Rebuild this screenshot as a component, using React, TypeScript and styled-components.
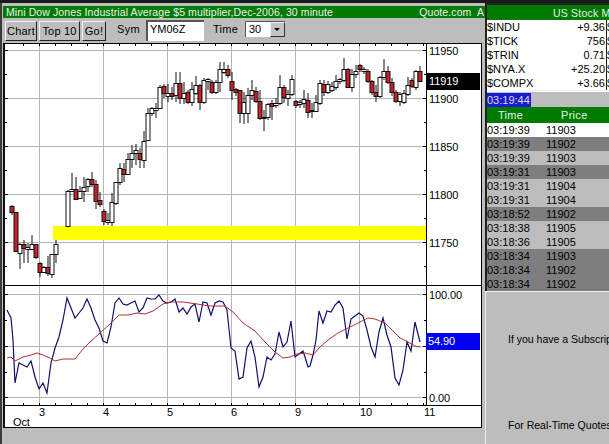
import React from 'react';
import styled, {createGlobalStyle} from "styled-components";

const GlobalStyle = createGlobalStyle`
    html, body {
        margin: 0;
        padding: 0;
        background: #bdbdbd;
    }
`

// [top, bottom, wick high, wick low, red], all in page pixels. null is a bar with no trade
type Bar = [number, number, number, number, boolean] | null
const R = true
const W = false

const bars: Bar[] = [
    [206, 212, 205, 215, R], [212, 251, 212, 251, R], [244, 253, 243, 269, W], [244, 248, 240, 263, R],
    [247, 249, 243, 263, W], [244, 249, 235, 250, W], [244, 257, 244, 259, R], [263, 272, 262, 277, R],
    [267, 272, 266, 273, W], [267, 273, 256, 276, R], [254, 274, 254, 278, W], [244, 254, 240, 263, W],
    null, null,
    [191, 226, 190, 226, W], [189, 191, 173, 192, W], [189, 199, 177, 199, R], [191, 198, 186, 199, W],
    [187, 191, 177, 202, W], [179, 186, 178, 192, W], [179, 184, 172, 187, R], [184, 201, 180, 209, R],
    [200, 204, 192, 207, R], [211, 221, 209, 225, R], [220, 222, 213, 225, W], [202, 222, 193, 226, W],
    [182, 203, 182, 205, W], [168, 182, 163, 185, W], [169, 174, 163, 182, R], [159, 174, 153, 175, W],
    [153, 159, 145, 168, W], [150, 153, 144, 165, W], [153, 159, 148, 168, R], [141, 160, 131, 168, W],
    [113, 140, 108, 141, W], [108, 113, 107, 116, W], [108, 110, 103, 118, W], [87, 108, 85, 109, W],
    [86, 93, 84, 98, R], [93, 96, 84, 102, W], [93, 96, 87, 100, R], [83, 95, 72, 102, W],
    [83, 98, 72, 104, R], [93, 98, 82, 104, W], [92, 102, 90, 104, R], [89, 102, 82, 106, W],
    [85, 93, 76, 95, W], [85, 102, 84, 110, R], [80, 102, 78, 104, W], [79, 81, 78, 90, W],
    [82, 92, 80, 94, R], [82, 92, 80, 94, W], [69, 82, 62, 92, W], [69, 72, 62, 74, W],
    [69, 75, 65, 78, R], [81, 90, 72, 100, R], [89, 92, 88, 96, R], [90, 113, 90, 123, R],
    [102, 113, 92, 124, W], [95, 113, 88, 123, W], [90, 95, 80, 100, W], [91, 101, 87, 103, R],
    [101, 118, 90, 120, R], [117, 118, 110, 131, W], [104, 117, 103, 120, W], [103, 106, 100, 120, R],
    [103, 105, 98, 108, W], [87, 103, 75, 105, W], [87, 97, 85, 103, R], [94, 98, 90, 106, W],
    [79, 94, 75, 96, W], [101, 105, 100, 108, R], [102, 104, 100, 108, W], [99, 103, 90, 108, W],
    [100, 112, 93, 118, R], [110, 111, 103, 118, W], [102, 111, 95, 112, W], [83, 103, 80, 105, W],
    [84, 92, 80, 96, R], [84, 92, 81, 94, W], [86, 90, 82, 92, W], [81, 87, 75, 90, W],
    [79, 81, 78, 84, W], [69, 80, 58, 82, W], [69, 87, 68, 88, R], [74, 87, 69, 92, W],
    [71, 74, 65, 78, W], [65, 69, 64, 72, R], [69, 71, 67, 74, W], [71, 81, 69, 83, R],
    [81, 92, 80, 95, R], [92, 96, 85, 102, R], [77, 96, 76, 98, W], [71, 77, 59, 80, W],
    [71, 82, 66, 84, R], [82, 92, 78, 96, R], [92, 101, 90, 103, R], [94, 101, 92, 106, W],
    [93, 102, 90, 104, W], [85, 94, 77, 96, W], [80, 86, 78, 88, R], [71, 87, 70, 90, W],
    [71, 81, 66, 82, R],
]

const oscillator = "7,310 11,318 13,340 15,383 19,363 23,365 27,367 31,361 35,377 39,389 43,383 47,393 51,363 55,348 59,337 63,320 67,298 71,308 75,318 79,313 83,308 87,299 91,308 95,320 99,328 103,341 107,343 111,327 115,303 119,298 123,304 127,305 131,303 135,301 139,312 143,308 147,298 151,299 155,299 159,295 163,301 167,303 171,302 175,299 179,312 183,308 187,314 191,307 195,304 199,322 203,302 207,303 211,315 215,303 219,301 223,302 227,310 231,348 235,351 239,379 243,377 247,348 251,341 255,357 259,387 263,377 267,357 271,360 275,354 279,332 283,347 287,342 291,321 295,357 299,354 303,351 305,357 308,367 310,366 313,355 316,340 319,311 323,323 327,311 331,312 335,305 339,301 343,308 347,339 351,319 355,316 359,313 363,316 367,330 371,347 375,357 379,332 383,318 387,335 391,347 395,378 399,385 403,370 407,342 411,351 415,322 420,342"
const average = "7,358 11,357 15,361 23,357 31,355 37,353 43,355 50,358 55,361 63,359 75,359 83,349 90,342 100,333 110,324 119,315 128,315 137,313 145,314 153,311 163,304 170,302 183,302 197,304 210,306 225,306 233,312 243,323 255,331 265,342 275,352 283,358 290,357 297,354 305,353 313,355 320,347 328,340 338,333 350,327 360,322 368,318 375,319 385,323 392,330 400,338 408,342 415,346 420,347"

const verticals = [39.5, 103.5, 167.5, 231.5, 295.5, 359.5]
const horizontals = [50.5, 98.5, 146.5, 194.5, 242.5, 294.5, 346.5, 397.5]
const minorTicks = [74, 122, 170, 218, 266, 320, 372]
const timeTicks = Array.from({length: 26}, (_, i) => 23.5 + i * 16)
const dayLabels = [['3', 39], ['4', 103], ['5', 167], ['6', 231], ['9', 295], ['10', 360], ['11', 424]] as const
const priceLabels = [['11950', 54.5], ['11900', 102.5], ['11850', 150.5], ['11800', 198.5], ['11750', 246.5], ['100.00', 298.5], ['0.00', 401.5]] as const

const indices = [
    ['$INDU', '+9.36'],
    ['$TICK', '756'],
    ['$TRIN', '0.71'],
    ['$NYA.X', '+25.20'],
    ['$COMPX', '+3.66'],
]

const trades: [string, string, 'white' | 'light' | 'dark'][] = [
    ['03:19:39', '11903', 'white'],
    ['03:19:39', '11902', 'dark'],
    ['03:19:39', '11903', 'light'],
    ['03:19:31', '11903', 'dark'],
    ['03:19:31', '11904', 'light'],
    ['03:19:31', '11904', 'light'],
    ['03:18:52', '11902', 'dark'],
    ['03:18:38', '11905', 'light'],
    ['03:18:36', '11905', 'light'],
    ['03:18:34', '11903', 'dark'],
    ['03:18:34', '11902', 'dark'],
    ['03:18:34', '11902', 'dark'],
]

const Candles = () => (
    <g>
        {bars.map((bar, i) => {
            if (!bar) return null
            const [top, bottom, high, low, red] = bar
            const x = 11.5 + i * 4
            return (
                <g key={i}>
                    <Wick x1={x + 0.5} x2={x + 0.5} y1={high} y2={low}/>
                    <Body x={x - 1.5} y={top + 0.5} width={4} height={Math.max(bottom - top, 1)} $red={red}/>
                </g>
            )
        })}
    </g>
)

const Chart = () => (
    <ChartSvg viewBox="5 44 476 383" width={476} height={383}>
        {verticals.map(x => <GridLine key={x} x1={x} x2={x} y1={44} y2={405}/>)}
        {horizontals.map(y => <GridLine key={y} x1={5} x2={426} y1={y} y2={y}/>)}
        <rect x={53} y={226} width={373} height={14} fill="#ffff00"/>
        <Candles/>
        <Oscillator points={oscillator}/>
        <Average points={average}/>

        {timeTicks.map(x => (
            <g key={x}>
                <Tick x1={x} x2={x} y1={44} y2={46}/>
                <Tick x1={x} x2={x} y1={403} y2={405}/>
            </g>
        ))}
        {horizontals.map(y => (
            <g key={y}>
                <Tick x1={5} x2={8} y1={y} y2={y}/>
                <Tick x1={423} x2={426} y1={y} y2={y}/>
            </g>
        ))}
        {minorTicks.map(y => (
            <g key={y}>
                <Tick x1={5} x2={7} y1={y + 0.5} y2={y + 0.5}/>
                <Tick x1={424} x2={426} y1={y + 0.5} y2={y + 0.5}/>
            </g>
        ))}

        <Tick x1={426.5} x2={426.5} y1={44} y2={405}/>
        <Tick x1={5} x2={481} y1={285.5} y2={285.5}/>
        <Tick x1={5} x2={481} y1={405.5} y2={405.5}/>

        {priceLabels.map(([label, y]) => <AxisText key={label} x={429} y={y}>{label}</AxisText>)}
        <rect x={426} y={73} width={54} height={17} fill="#000"/>
        <AxisText x={429} y={85} fill="#fff">11919</AxisText>
        <rect x={426} y={333} width={54} height={17} fill="#0000f0"/>
        <AxisText x={428} y={345} fill="#fff">54.90</AxisText>

        {dayLabels.map(([label, x]) => <AxisText key={label} x={x} y={416}>{label}</AxisText>)}
        <AxisText x={13} y={426}>Oct</AxisText>
    </ChartSvg>
)

export default function App() {
    return (
        <>
            <GlobalStyle/>
            <Page>
                <TopRule/>
                <Columns>
                    <LeftColumn>
                        <TitleBar>
                            <span>Mini Dow Jones Industrial Average $5 multiplier,Dec-2006, 30 minute</span>
                            <Vendor>Quote.com  A</Vendor>
                        </TitleBar>
                        <Toolbar>
                            <ToolButton $width={32}>Chart</ToolButton>
                            <ToolButton $width={41}>Top 10</ToolButton>
                            <ToolButton $width={24}>Go!</ToolButton>
                            <ToolLabel $left={9}>Sym</ToolLabel>
                            <SymbolField>YM06Z</SymbolField>
                            <ToolLabel $left={7}>Time</ToolLabel>
                            <SelectBox>
                                30
                                <SelectArrow/>
                            </SelectBox>
                        </Toolbar>
                        <ChartFrame>
                            <Chart/>
                        </ChartFrame>
                    </LeftColumn>
                    <RightColumn>
                        <QuotesBlock>
                            <GreenHeader>US Stock Market</GreenHeader>
                            <IndexList>
                                {indices.map(([name, value]) => (
                                    <IndexRow key={name}>
                                        <span>{name}</span>
                                        <IndexValue>{value}</IndexValue>
                                        <NextColumn>$</NextColumn>
                                    </IndexRow>
                                ))}
                            </IndexList>
                            <ClockRow>
                                <Clock>03:19:44</Clock>
                            </ClockRow>
                            <TradeHeader>
                                <span>Time</span>
                                <span>Price</span>
                            </TradeHeader>
                            {trades.map(([time, price, tone], i) => (
                                <TradeRow key={i} $tone={tone}>
                                    <span>{time}</span>
                                    <span>{price}</span>
                                </TradeRow>
                            ))}
                        </QuotesBlock>
                        <Notice>
                            <NoticeLine>If you have a Subscription</NoticeLine>
                            <NoticeLine>For Real-Time Quotes</NoticeLine>
                        </Notice>
                    </RightColumn>
                </Columns>
            </Page>
        </>
    );
};

const Page = styled.div`
    width: 609px;
    height: 444px;
    overflow: hidden;
    display: flex;
    flex-direction: column;
    background: #bdbdbd;
    color: #000;
    font-family: "Liberation Sans", Arial, sans-serif;
    font-size: 11px;
`

const TopRule = styled.div`
    height: 3px;
    flex: none;
    background: #1a1a1a;
`

const Columns = styled.div`
    flex: 1;
    min-height: 0;
    display: flex;
`

const LeftColumn = styled.div`
    width: 483px;
    flex: none;
    border-left: 2px solid #3a3a3a;
    padding-top: 3px;
`

const TitleBar = styled.div`
    height: 12px;
    margin-left: 1px;
    padding-left: 3px;
    display: flex;
    justify-content: space-between;
    align-items: center;
    overflow: hidden;
    background: #007a00;
    color: #e8f5e8;
    font-size: 10.5px;
    letter-spacing: 0.1px;
    white-space: pre;
`

const Vendor = styled.span`
    margin-right: 1px;
`

const Toolbar = styled.div`
    height: 25px;
    box-sizing: border-box;
    padding: 3px 0 0 3px;
    display: flex;
    align-items: flex-start;
    gap: 2px;
    font-size: 11px;
`

const ToolButton = styled.div<{ $width: number }>`
    width: ${props => props.$width}px;
    height: 20px;
    box-sizing: border-box;
    display: flex;
    align-items: center;
    justify-content: center;
    background: #bdbdbd;
    border: 1px solid;
    border-color: #f4f4f4 #222 #222 #f4f4f4;
    letter-spacing: 0.2px;
`

const ToolLabel = styled.span<{ $left: number }>`
    margin-left: ${props => props.$left}px;
    padding-top: 2px;
    width: 27px;
    letter-spacing: 0.3px;
`

const SymbolField = styled.div`
    width: 58px;
    height: 21px;
    box-sizing: border-box;
    margin-top: -1px;
    padding: 1px 0 0 2px;
    background: #fff;
    border-top: 2px solid #555;
    border-left: 2px solid #555;
`

const SelectBox = styled.div`
    width: 40px;
    height: 16px;
    box-sizing: border-box;
    margin-left: 3px;
    padding-left: 3px;
    position: relative;
    background: #fff;
    border-top: 1px solid #555;
    border-left: 1px solid #555;
    line-height: 14px;
`

const SelectArrow = styled.div`
    position: absolute;
    top: 0;
    right: 0;
    width: 15px;
    height: 15px;
    box-sizing: border-box;
    background: #c4c4c4;
    border: 1px solid;
    border-color: #eee #333 #333 #eee;

    &:after {
        content: '';
        position: absolute;
        left: 3px;
        top: 5px;
        border: 3px solid transparent;
        border-top: 3px solid #000;
        border-bottom: 0;
    }
`

const ChartFrame = styled.div`
    width: 476px;
    height: 383px;
    margin-left: 1px;
    background: #fff;
    border: 1px solid #000;
    border-left: 2px solid #111;
`

const ChartSvg = styled.svg`
    display: block;
`

const GridLine = styled.line`
    stroke: #b4b4b4;
    stroke-width: 1;
`

const Tick = styled.line`
    stroke: #000;
    stroke-width: 1;
`

const Wick = styled.line`
    stroke: #111;
    stroke-width: 1;
`

const Body = styled.rect<{ $red: boolean }>`
    fill: ${props => props.$red ? '#c8202a' : '#fff'};
    stroke: #111;
    stroke-width: 1;
`

const Oscillator = styled.polyline`
    fill: none;
    stroke: #10106e;
    stroke-width: 1.2;
`

const Average = styled.polyline`
    fill: none;
    stroke: #b03038;
    stroke-width: 1;
`

const AxisText = styled.text`
    font-family: "Liberation Sans", Arial, sans-serif;
    font-size: 11px;
    letter-spacing: -0.1px;
`

const RightColumn = styled.div`
    flex: 1;
    min-width: 0;
    display: flex;
    flex-direction: column;
    overflow: hidden;
`

const QuotesBlock = styled.div`
    flex: none;
    border-top: 2px solid #222;
    border-left: 2px solid #222;
`

const GreenHeader = styled.div`
    height: 15px;
    line-height: 16px;
    padding-left: 66px;
    background: #007a00;
    color: #e8f5e8;
    font-size: 10.5px;
    letter-spacing: 0.2px;
    white-space: nowrap;
    overflow: hidden;
`

const IndexList = styled.div`
    background: #fff;
    border-bottom: 1px solid #eee;
`

const IndexRow = styled.div`
    height: 14px;
    line-height: 14px;
    display: grid;
    grid-template-columns: 52px 67px 3px;
`

const IndexValue = styled.span`
    text-align: right;
    padding-right: 1px;
`

const NextColumn = styled.span`
    border-left: 1px solid #222;
    overflow: hidden;
`

const ClockRow = styled.div`
    height: 16px;
    padding-top: 1px;
    box-sizing: border-box;
    border-top: 1px solid #fff;
    background: #bdbdbd;
`

const Clock = styled.div`
    width: 44px;
    height: 14px;
    line-height: 15px;
    background: #1c1ccc;
    color: #d8d8ff;
    white-space: nowrap;
`

const TradeHeader = styled.div`
    height: 16px;
    line-height: 16px;
    display: grid;
    grid-template-columns: 59px 1fr;
    background: #007a00;
    color: #e8f5e8;
    letter-spacing: 0.3px;

    & > span:first-child {
        padding-left: 11px;
    }

    & > span:last-child {
        padding-left: 15px;
    }
`

const TradeRow = styled.div<{ $tone: 'white' | 'light' | 'dark' }>`
    height: 14px;
    line-height: 14px;
    display: grid;
    grid-template-columns: 59px 1fr;
    background: ${props => ({white: '#fff', light: '#bcbcbc', dark: '#7e7e7e'})[props.$tone]};
`

const Notice = styled.div`
    flex: 1;
    padding: 41px 0 0 22px;
    display: flex;
    flex-direction: column;
    gap: 73px;
    border-top: 1px solid #f0f0f0;
    border-left: 1px solid #f0f0f0;
`

const NoticeLine = styled.div`
    height: 13px;
    white-space: nowrap;
    font-size: 10.5px;
`
